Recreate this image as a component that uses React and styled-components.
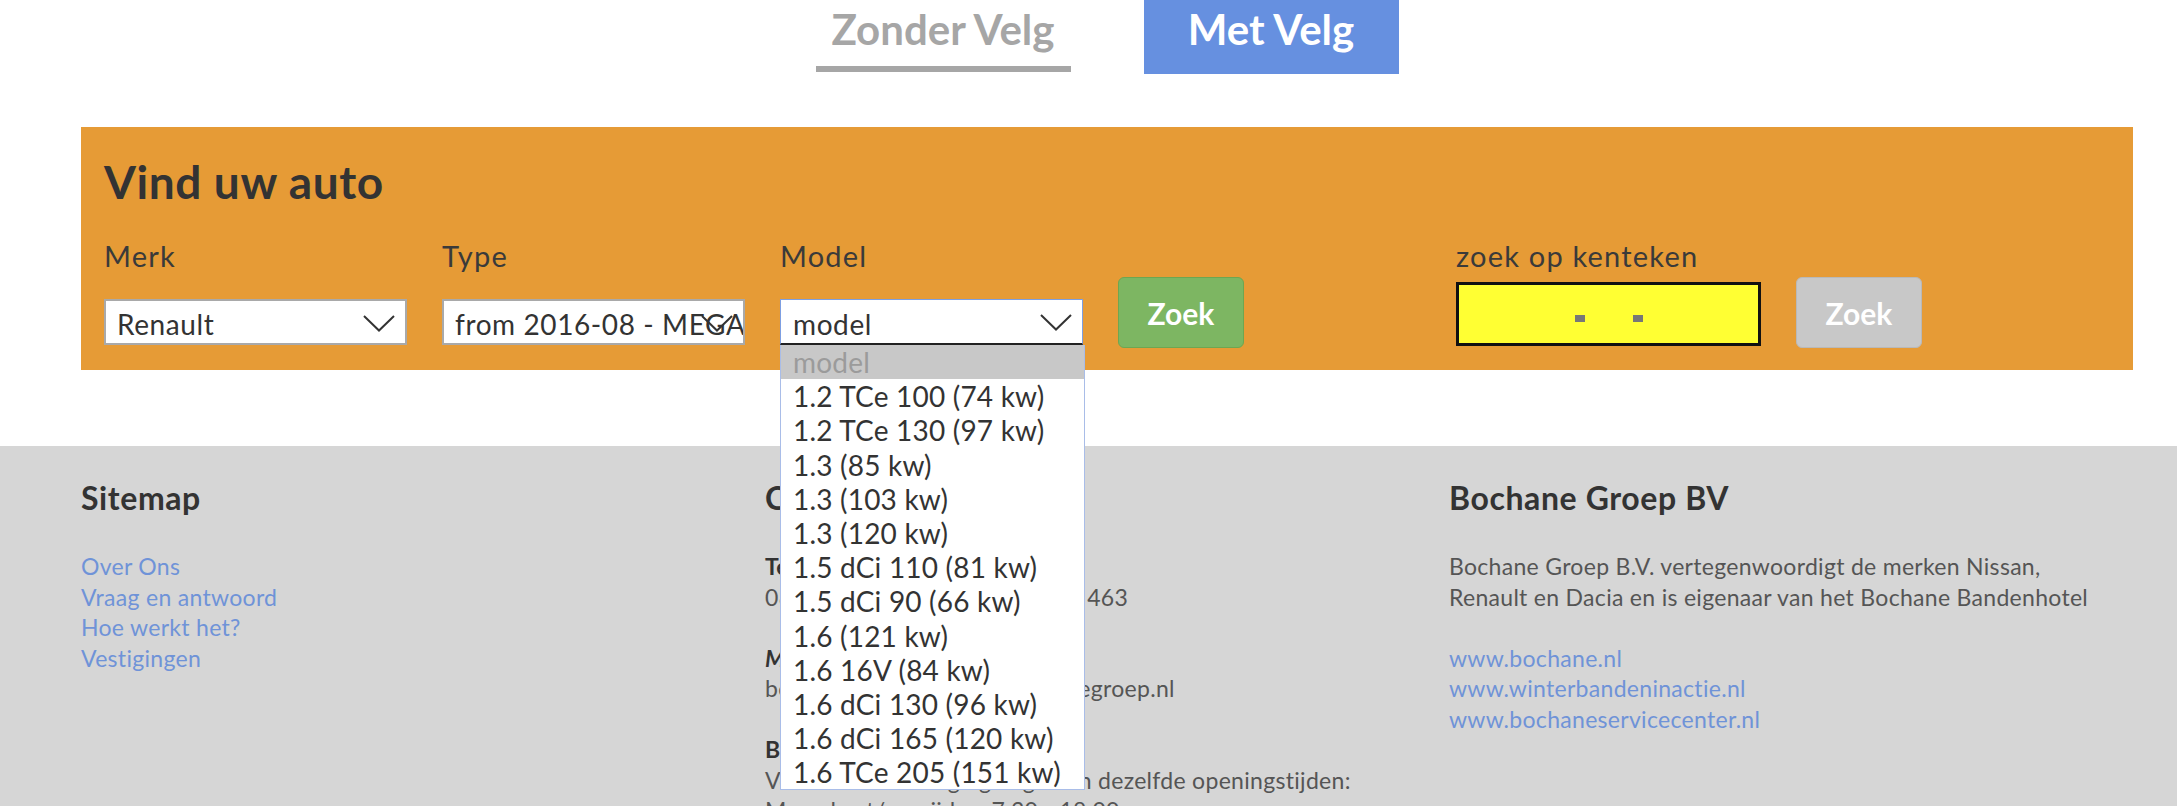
import React from 'react';
import styled, { createGlobalStyle } from 'styled-components';

const GlobalStyle = createGlobalStyle`
  body {
    margin: 0;
    background: #fff;
    font-family: Lato, "Open Sans", Arial, sans-serif;
    color: #333;
  }
  * { box-sizing: border-box; }
`

const Page = styled('div')`
  position: relative;
  width: 100%;
  overflow: hidden;
`

const Container = styled('div')`
  width: 2052px;
  margin-left: 81px;
`

const Tabs = styled('div')`
  display: flex;
  justify-content: center;
  gap: 73px;
`

const Tab = styled('div')`
  width: 255px;
  height: ${p => (p.active ? '74px' : '72px')};
  display: flex;
  align-items: flex-start;
  justify-content: center;
  padding-top: 4px;
  font-size: 42px;
  font-weight: 700;
  color: ${p => (p.active ? '#fff' : '#a6a6a6')};
  background: ${p => (p.active ? '#6690e0' : 'transparent')};
  border-bottom: ${p => (p.active ? 'none' : '6px solid #a6a6a6')};
`

const Finder = styled('section')`
  margin-top: 53px;
  height: 243px;
  background: #e69b36;
  padding: 32px 23px 0;
`

const Title = styled('h2')`
  margin: 0 0 37px;
  font-size: 46px;
  line-height: 46px;
  font-weight: 700;
  color: #333;
  letter-spacing: 0.6px;
`

const Row = styled('div')`
  display: flex;
  align-items: flex-start;
  gap: 35px;
`

const Group = styled('div')`
  position: relative;
  display: flex;
  flex-direction: column;
  margin-left: ${p => p.offset || 0}px;
  padding-top: ${p => p.top || 0}px;
`

const Label = styled('label')`
  height: 28px;
  font-size: 29px;
  line-height: 28px;
  color: #3a3a3a;
  margin-bottom: ${p => p.gap}px;
  letter-spacing: 1.2px;
  white-space: nowrap;
`

const Select = styled('div')`
  position: relative;
  width: 303px;
  height: 46px;
  background: #fff;
  border: ${p => (p.focused ? '1px solid #7d9fe2' : '2px solid #a9a9a9')};
  border-bottom: ${p => (p.focused ? '2px solid #222' : '2px solid #a9a9a9')};
  display: flex;
  align-items: center;
  padding-left: ${p => (p.focused ? 12 : 11)}px;
  overflow: hidden;
`

const SelectText = styled('span')`
  font-size: 28px;
  letter-spacing: 0.6px;
  color: #333;
  white-space: nowrap;
  padding-top: 4px;
`

const Chevron = styled('svg')`
  position: absolute;
  right: 10px;
  top: 14px;
`

const DropList = styled('ul')`
  position: absolute;
  top: 103px;
  left: 0;
  z-index: 5;
  width: 305px;
  margin: 0;
  padding: 0;
  list-style: none;
  background: #fff;
  border: 1px solid #a9bde8;
  border-top: none;
`

const Option = styled('li')`
  height: 34.2px;
  line-height: 34.2px;
  padding-left: 12px;
  font-size: 28px;
  letter-spacing: 0.2px;
  color: ${p => (p.selected ? '#9b9b9b' : '#333')};
  background: ${p => (p.selected ? '#c8c8c8' : '#fff')};
  white-space: nowrap;
`

const Button = styled('button')`
  width: 126px;
  height: 71px;
  border-radius: 6px;
  border: 1px solid ${p => (p.disabled ? '#b9b9b9' : '#6ea651')};
  background: ${p => (p.disabled ? '#c8c8c8' : '#7db662')};
  color: #fff;
  font-family: inherit;
  font-size: 30px;
  font-weight: 700;
  padding: 0;
`

const Plate = styled('div')`
  width: 305px;
  height: 64px;
  background: #ffff33;
  border: 3px solid #111;
  display: flex;
  align-items: center;
  justify-content: center;
  gap: 48px;
`

const Dash = styled('span')`
  width: 10px;
  height: 7px;
  background: #777;
  margin-top: 8px;
`

const Footer = styled('footer')`
  margin-top: 76px;
  background: #d6d6d6;
  height: 380px;
  padding-top: 33px;
`

const Columns = styled('div')`
  display: grid;
  grid-template-columns: repeat(3, 1fr);
`

const Col = styled('div')`
  font-size: 23px;
  line-height: 30.5px;
  color: #555;
`

const ColTitle = styled('h3')`
  margin: 0 0 34px;
  font-size: 32px;
  line-height: 38px;
  font-weight: 700;
  letter-spacing: 0.6px;
  color: #333;
`

const Line = styled('div')`
  min-height: 30.5px;
  white-space: nowrap;
  letter-spacing: 0.3px;
  font-weight: ${p => (p.bold ? 700 : 400)};
  font-style: ${p => (p.italic ? 'italic' : 'normal')};
  color: ${p => (p.bold ? '#333' : '#555')};
`

const Link = styled('a')`
  display: block;
  color: #6f93d8;
  text-decoration: none;
  white-space: nowrap;
  letter-spacing: 0.3px;
`

const ChevronIcon = () => (
  <Chevron width="32" height="17" viewBox="0 0 32 17">
    <polyline points="1,1 16,15.5 31,1" fill="none" stroke="#333" strokeWidth="2" />
  </Chevron>
)

const models = [
  '1.2 TCe 100 (74 kw)',
  '1.2 TCe 130 (97 kw)',
  '1.3 (85 kw)',
  '1.3 (103 kw)',
  '1.3 (120 kw)',
  '1.5 dCi 110 (81 kw)',
  '1.5 dCi 90 (66 kw)',
  '1.6 (121 kw)',
  '1.6 16V (84 kw)',
  '1.6 dCi 130 (96 kw)',
  '1.6 dCi 165 (120 kw)',
  '1.6 TCe 205 (151 kw)',
]

export default function App() {
  return (
    <Page>
      <GlobalStyle />
      <Container>
        <Tabs>
          <Tab>Zonder Velg</Tab>
          <Tab active>Met Velg</Tab>
        </Tabs>

        <Finder>
          <Title>Vind uw auto</Title>
          <Row>
            <Group>
              <Label gap={29}>Merk</Label>
              <Select>
                <SelectText>Renault</SelectText>
                <ChevronIcon />
              </Select>
            </Group>
            <Group>
              <Label gap={29}>Type</Label>
              <Select>
                <SelectText>from 2016-08 - MEGANE</SelectText>
                <ChevronIcon />
              </Select>
            </Group>
            <Group>
              <Label gap={29}>Model</Label>
              <Select focused>
                <SelectText>model</SelectText>
                <ChevronIcon />
              </Select>
              <DropList>
                <Option selected>model</Option>
                {models.map(m => (
                  <Option key={m}>{m}</Option>
                ))}
              </DropList>
            </Group>
            <Group top={35}>
              <Button>Zoek</Button>
            </Group>
            <Group offset={177}>
              <Label gap={12}>zoek op kenteken</Label>
              <Plate>
                <Dash />
                <Dash />
              </Plate>
            </Group>
            <Group top={35}>
              <Button disabled>Zoek</Button>
            </Group>
          </Row>
        </Finder>
      </Container>

      <Footer>
        <Container>
          <Columns>
            <Col>
              <ColTitle>Sitemap</ColTitle>
              <Link>Over Ons</Link>
              <Link>Vraag en antwoord</Link>
              <Link>Hoe werkt het?</Link>
              <Link>Vestigingen</Link>
            </Col>
            <Col>
              <ColTitle>Contact</ColTitle>
              <Line bold>Telefoon</Line>
              <Line>088 - 24 62 460 / 088 - 24 62 463</Line>
              <Line />
              <Line bold italic>Mail</Line>
              <Line>bochanebandenhotel@bochanegroep.nl</Line>
              <Line />
              <Line bold>Bandenhotel</Line>
              <Line>Voor al onze vestigingen gelden dezelfde openingstijden:</Line>
              <Line>Maandag t/m vrijdag: 7.30 - 18.00</Line>
            </Col>
            <Col>
              <ColTitle>Bochane Groep BV</ColTitle>
              <Line>Bochane Groep B.V. vertegenwoordigt de merken Nissan,</Line>
              <Line>Renault en Dacia en is eigenaar van het Bochane Bandenhotel</Line>
              <Line />
              <Link>www.bochane.nl</Link>
              <Link>www.winterbandeninactie.nl</Link>
              <Link>www.bochaneservicecenter.nl</Link>
            </Col>
          </Columns>
        </Container>
      </Footer>
    </Page>
  );
}
